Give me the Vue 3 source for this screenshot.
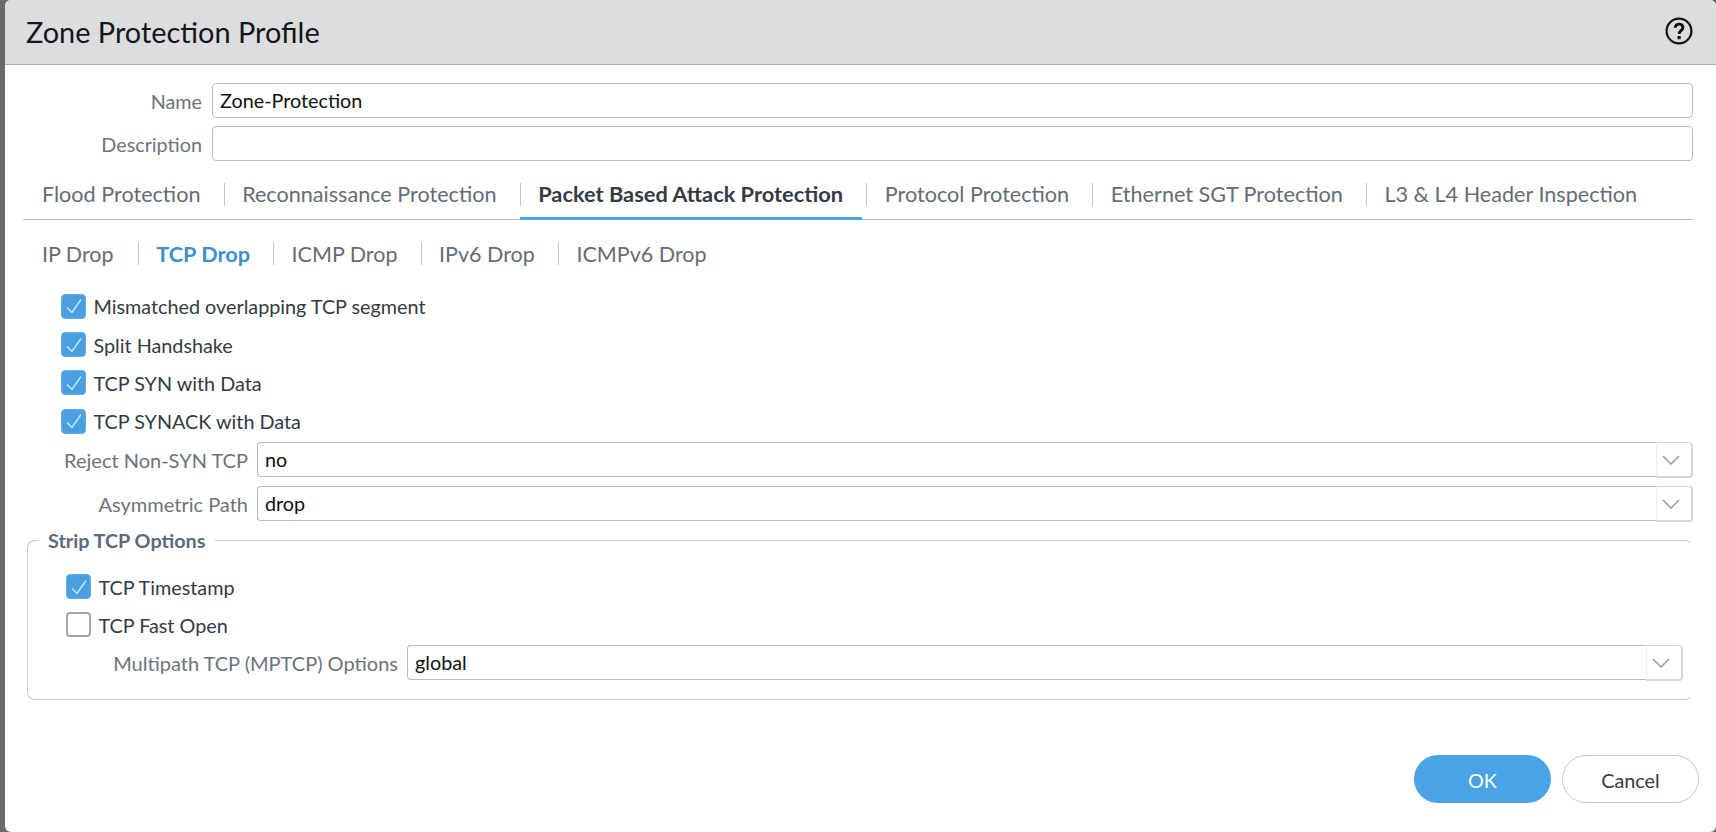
<script setup>
const tabs = ['Flood Protection', 'Reconnaissance Protection', 'Packet Based Attack Protection', 'Protocol Protection', 'Ethernet SGT Protection', 'L3 & L4 Header Inspection']
const subTabs = ['IP Drop', 'TCP Drop', 'ICMP Drop', 'IPv6 Drop', 'ICMPv6 Drop']
const checks = ['Mismatched overlapping TCP segment', 'Split Handshake', 'TCP SYN with Data', 'TCP SYNACK with Data']
const selects = [
  { label: 'Reject Non-SYN TCP', value: 'no' },
  { label: 'Asymmetric Path', value: 'drop' }
]
const strip = [
  { label: 'TCP Timestamp', on: true },
  { label: 'TCP Fast Open', on: false }
]
</script>

<template>
  <div class="dialog">
    <header class="head">
      <h1 class="title">Zone Protection Profile</h1>
      <svg class="help" width="28" height="28" viewBox="0 0 28 28" fill="none">
        <circle cx="14" cy="14" r="12.4" stroke="#111315" stroke-width="2.2" />
        <path d="M10.2 10.8c0-2.2 1.7-3.7 3.9-3.7s3.8 1.4 3.8 3.4c0 2.9-3.7 3-3.7 6.6" stroke="#111315" stroke-width="2.9" />
        <rect x="12.5" y="19" width="3.2" height="3.2" fill="#111315" />
      </svg>
    </header>

    <main class="body">
      <div class="name-row">
        <label class="label name-label">Name</label>
        <div class="input">Zone-Protection</div>
      </div>
      <div class="name-row desc-row">
        <label class="label name-label">Description</label>
        <div class="input"></div>
      </div>

      <nav class="tabs">
        <div v-for="(t, i) in tabs" :key="t" class="tab" :class="{ active: i === 2 }">{{ t }}</div>
      </nav>

      <nav class="subtabs">
        <div v-for="(t, i) in subTabs" :key="t" class="subtab" :class="{ active: i === 1 }">{{ t }}</div>
      </nav>

      <div class="checks">
        <div v-for="c in checks" :key="c" class="check">
          <span class="box on">
            <svg width="16" height="16" viewBox="0 0 16 16" fill="none"><path d="M1 9.5l5 5L15 1.5" stroke="#cfe6f8" stroke-width="1.4" /></svg>
          </span>
          <span>{{ c }}</span>
        </div>
      </div>

      <div class="selects">
        <div v-for="s in selects" :key="s.label" class="select-row">
          <label class="label reject-label">{{ s.label }}</label>
          <div class="select">
            <span class="select-value">{{ s.value }}</span>
            <span class="arrow">
              <svg width="18" height="10" viewBox="0 0 18 10" fill="none"><path d="M1 1l8 8 8-8" stroke="#9a9ea3" stroke-width="1.6" /></svg>
            </span>
          </div>
        </div>
      </div>

      <fieldset class="group">
        <legend class="legend">Strip TCP Options</legend>
        <div class="checks group-checks">
          <div v-for="c in strip" :key="c.label" class="check">
            <span class="box" :class="{ on: c.on }">
              <svg v-if="c.on" width="16" height="16" viewBox="0 0 16 16" fill="none"><path d="M1 9.5l5 5L15 1.5" stroke="#cfe6f8" stroke-width="1.4" /></svg>
            </span>
            <span>{{ c.label }}</span>
          </div>
        </div>
        <div class="select-row mptcp-row">
          <label class="label mptcp-label">Multipath TCP (MPTCP) Options</label>
          <div class="select">
            <span class="select-value">global</span>
            <span class="arrow">
              <svg width="18" height="10" viewBox="0 0 18 10" fill="none"><path d="M1 1l8 8 8-8" stroke="#9a9ea3" stroke-width="1.6" /></svg>
            </span>
          </div>
        </div>
      </fieldset>
    </main>

    <footer class="foot">
      <button class="btn ok" type="button">OK</button>
      <button class="btn cancel" type="button">Cancel</button>
    </footer>
  </div>
</template>

<style>
html, body {
  margin: 0;
  background: #6a6a6a;
  overflow: hidden;
}
</style>

<style scoped>
.dialog {
  box-sizing: border-box;
  width: 1711px;
  height: 832px;
  margin-left: 5px;
  display: flex;
  flex-direction: column;
  background: #fff;
  border-radius: 6px;
  overflow: hidden;
  font-family: Lato, "Liberation Sans", sans-serif;
  font-size: 19.8px;
  color: #333b44;
}
.head {
  box-sizing: border-box;
  height: 65px;
  flex: none;
  display: flex;
  align-items: center;
  justify-content: space-between;
  padding: 0 23px 2px 21px;
  background: #dcdddf;
  border-bottom: 1px solid #a9adb1;
}
.title {
  margin: 0;
  font-size: 28.9px;
  font-weight: 400;
  color: #141618;
}
.help { display: block; }
.body {
  flex: 1;
  min-height: 0;
  display: flex;
  flex-direction: column;
  padding: 18px 23px 0 18px;
}
.name-row {
  display: flex;
  align-items: center;
  gap: 10px;
}
.desc-row { margin-top: 8px; }
.label {
  flex: none;
  text-align: right;
  color: #6b747c;
}
.name-label { width: 179px; }
.input {
  flex: 1;
  box-sizing: border-box;
  height: 35px;
  line-height: 33px;
  padding-left: 7px;
  border: 1px solid #b9bbbd;
  border-radius: 4px;
  color: #111;
}
.tabs {
  display: flex;
  gap: 4.2px;
  height: 58px;
  border-bottom: 1px solid #b9bcbf;
}
.tab, .subtab {
  position: relative;
  display: flex;
  align-items: center;
  color: #636d76;
  white-space: nowrap;
}
.tab {
  box-sizing: border-box;
  height: 59px;
  padding: 9px 19px 0 18.5px;
  border-bottom: 3px solid transparent;
  font-size: 21.6px;
}
.tab:first-child { padding-left: 19px; }
.tab + .tab::before {
  content: "";
  position: absolute;
  left: 0;
  top: 22px;
  height: 23px;
  width: 1px;
  background: #c4c7ca;
}
.tab.active {
  border-bottom-color: #4aa3e4;
  font-weight: 700;
  font-size: 21.8px;
  color: #333b44;
}
.subtabs {
  display: flex;
  height: 67px;
  align-items: center;
}
.subtab {
  height: 23px;
  padding: 0 23px 0 17.6px;
  font-size: 21.5px;
}
.subtab:first-child { padding: 0 24px 0 19px; }
.subtab + .subtab { border-left: 1px solid #c4c7ca; }
.subtab.active {
  color: #3d8fd0;
  font-weight: 700;
  font-size: 21.7px;
}
.checks {
  display: flex;
  flex-direction: column;
  gap: 13.8px;
  margin: 7px 0 0 38px;
}
.check {
  display: flex;
  align-items: center;
  gap: 7.5px;
  height: 24.5px;
}
.box {
  box-sizing: border-box;
  width: 25px;
  height: 25px;
  flex: none;
  display: flex;
  align-items: center;
  justify-content: center;
  border: 2px solid #a3a6a9;
  border-radius: 4px;
  background: #fff;
}
.box.on {
  border: 1px solid #64b0e8;
  background: #4a9fe0;
}
.selects {
  display: flex;
  flex-direction: column;
  gap: 9px;
  margin-top: 8.7px;
}
.select-row {
  display: flex;
  align-items: center;
  gap: 9px;
}
.select-row .label { font-size: 20px; }
.reject-label { width: 225px; }
.mptcp-label { width: 370px; }
.select {
  flex: 1;
  display: flex;
  height: 35px;
  box-sizing: border-box;
}
.select-value {
  flex: 1;
  box-sizing: border-box;
  line-height: 33px;
  padding-left: 7px;
  border: 1px solid #b9bbbd;
  border-right: 0;
  border-radius: 4px 0 0 4px;
  color: #111;
}
.arrow {
  box-sizing: border-box;
  width: 37px;
  height: 36px;
  flex: none;
  display: flex;
  align-items: center;
  padding-left: 5px;
  border: 1px solid #d4d6d8;
  border-left: 1px solid #eceded;
  border-right: 2px solid #d4d6d8;
  border-bottom: 2px solid #d4d6d8;
  border-radius: 0 4px 4px 0;
}
.group {
  box-sizing: border-box;
  min-width: 0;
  margin: 6.3px 0 0 4px;
  padding: 0 9px 19px 0;
  border: 1px solid #c9cbcd;
  border-right-color: #fff;
  border-radius: 8px;
}
.legend {
  margin-left: 10px;
  padding: 0 10px;
  font-size: 19.8px;
  font-weight: 700;
  line-height: 26px;
  color: #5a6b7a;
}
.group-checks { margin: 21px 0 0 38px; }
.mptcp-row { margin-top: 8px; }
.foot {
  flex: none;
  display: flex;
  justify-content: flex-end;
  gap: 11px;
  padding: 0 17px 29px 0;
}
.btn {
  box-sizing: border-box;
  width: 137px;
  height: 48px;
  border-radius: 24px;
  font-family: inherit;
  font-size: 19.8px;
  padding: 1px 0 0;
}
.ok {
  border: 0;
  background: #4aa3e4;
  color: #fff;
}
.cancel {
  border: 1px solid #c6c8ca;
  background: #fff;
  color: #333b44;
}
</style>
